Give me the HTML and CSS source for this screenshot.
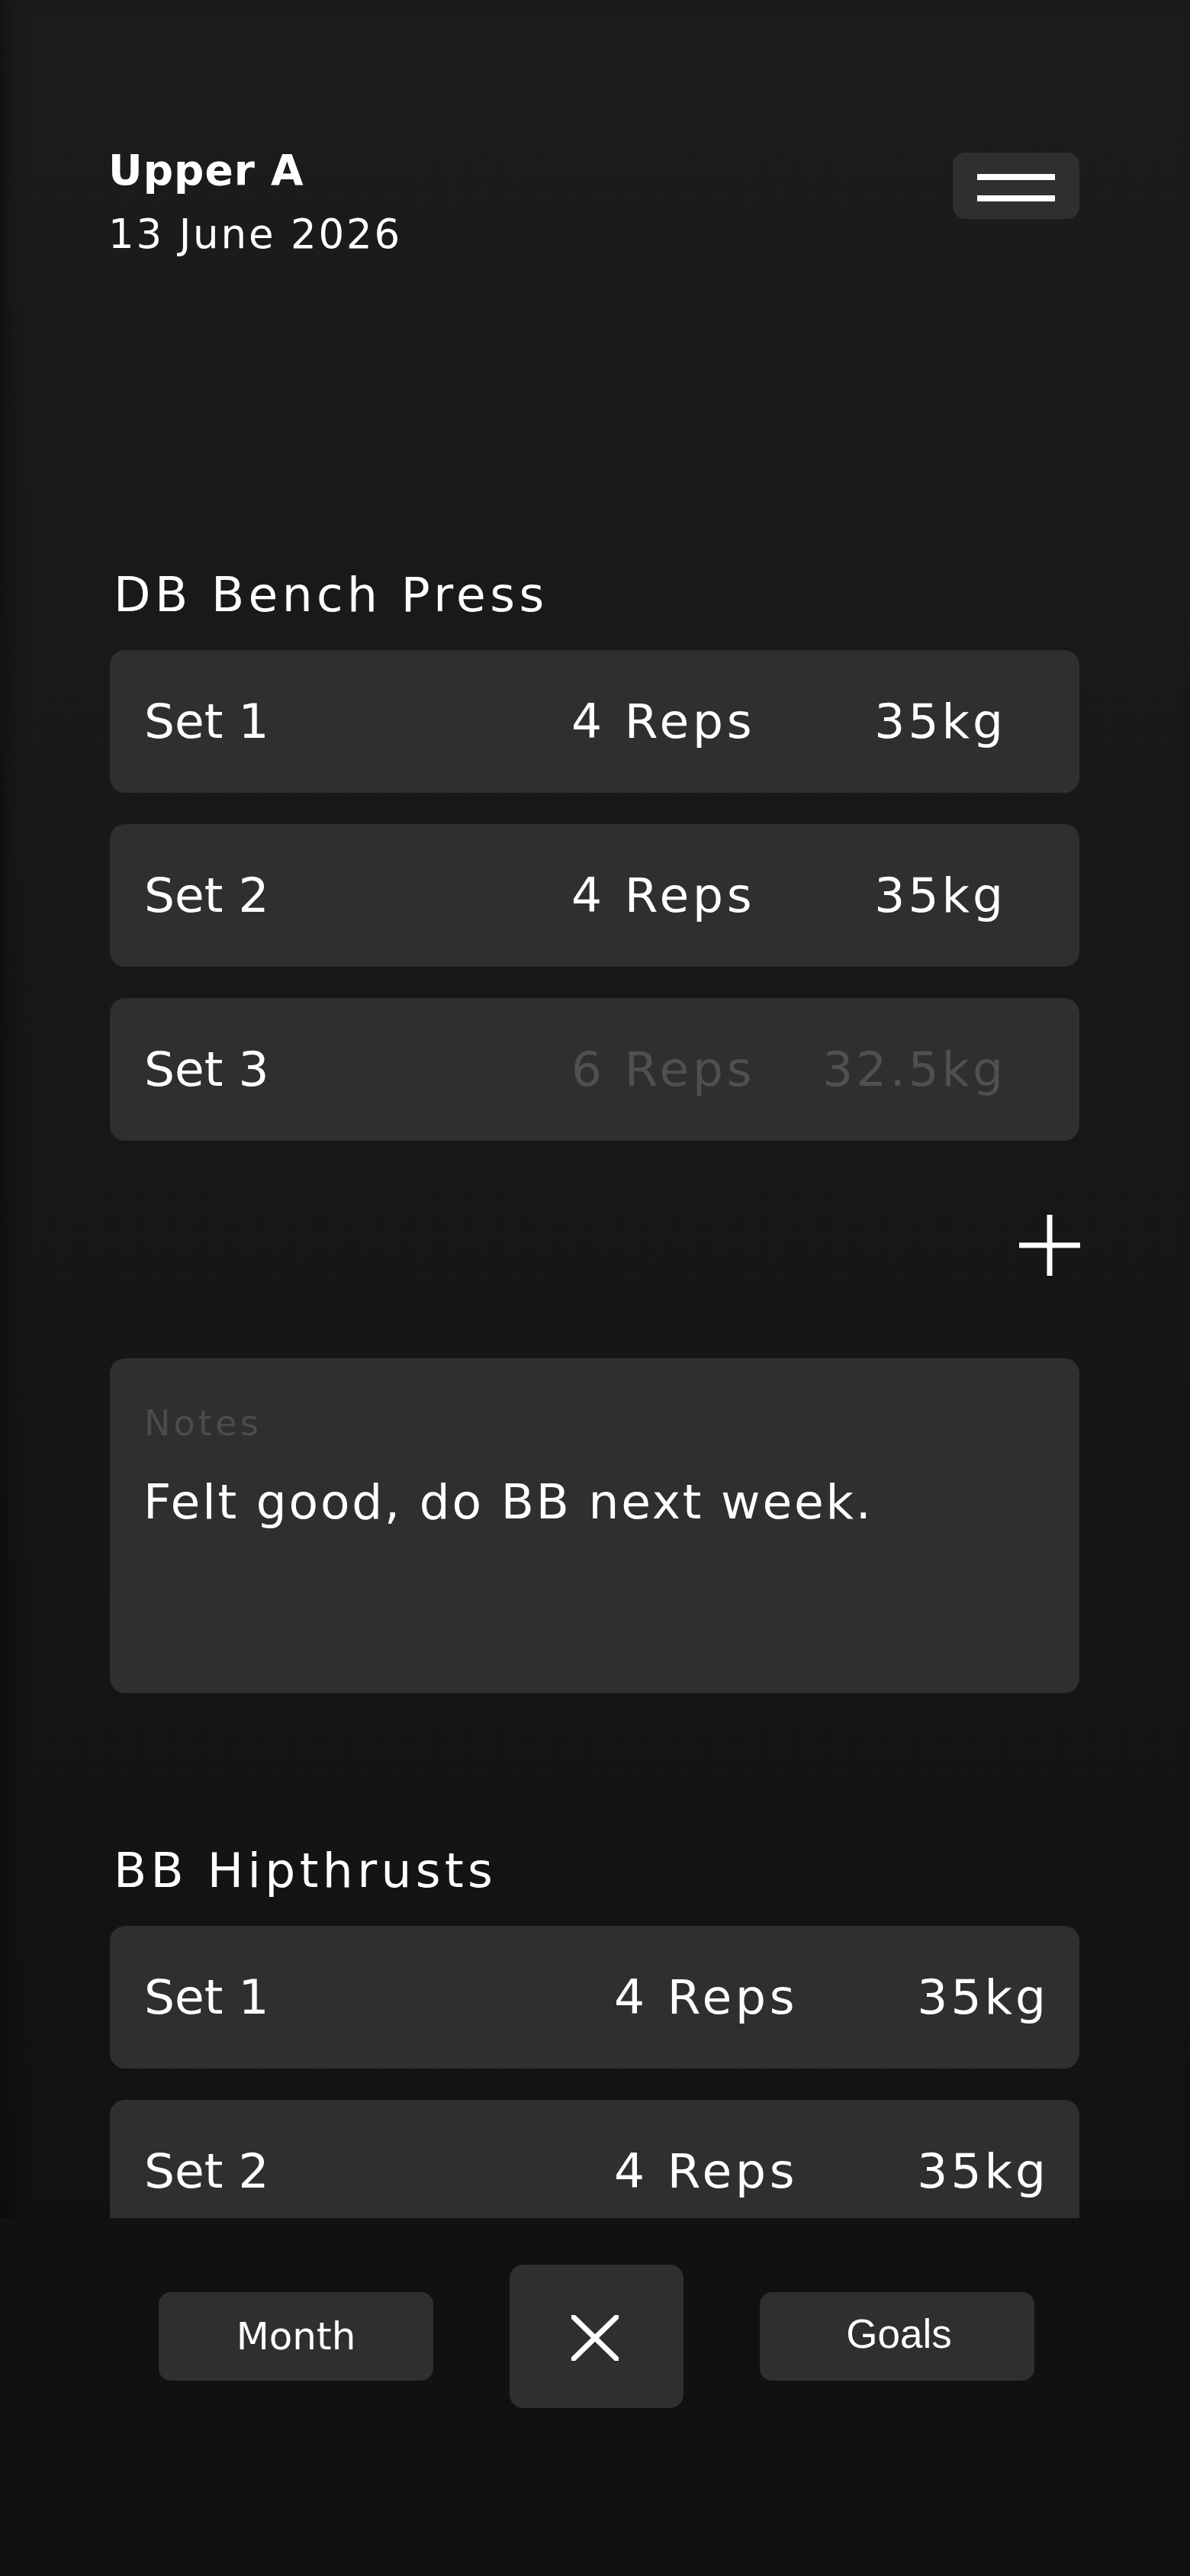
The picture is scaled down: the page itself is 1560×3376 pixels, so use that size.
FILE: index.html
```html
<!DOCTYPE html>
<html lang="en">
<head>
<meta charset="utf-8">
<title>Upper A</title>
<link rel="stylesheet" href="styles.css">
</head>
<body>
<div class="app">
  <main class="scroll">
    <header class="top">
      <div class="title-block">
        <h1 class="title">Upper A</h1>
        <p class="date">13 June 2026</p>
      </div>
      <button class="menu-btn" aria-label="Menu"><span class="bar"></span><span class="bar"></span></button>
    </header>

    <section class="exercise ex-first">
      <h2 class="ex-name">DB Bench Press</h2>
      <div class="sets">
        <div class="set-row"><span class="set-label">Set 1</span><span class="set-reps">4 Reps</span><span class="set-kg">35kg</span></div>
        <div class="set-row"><span class="set-label">Set 2</span><span class="set-reps">4 Reps</span><span class="set-kg">35kg</span></div>
        <div class="set-row is-pending"><span class="set-label">Set 3</span><span class="set-reps">6 Reps</span><span class="set-kg">32.5kg</span></div>
      </div>
      <div class="add-row">
        <button class="add-btn" aria-label="Add set">
          <svg class="plus-icon" viewBox="0 0 80 80" width="80" height="80"><path d="M40 0V80M0 40H80" stroke="#fff" stroke-width="7" fill="none"/></svg>
        </button>
      </div>
      <div class="notes">
        <div class="notes-label">Notes</div>
        <div class="notes-text">Felt good, do BB next week.</div>
      </div>
    </section>

    <section class="exercise ex-second">
      <h2 class="ex-name">BB Hipthrusts</h2>
      <div class="sets">
        <div class="set-row"><span class="set-label">Set 1</span><span class="set-reps">4 Reps</span><span class="set-kg">35kg</span></div>
        <div class="set-row"><span class="set-label">Set 2</span><span class="set-reps">4 Reps</span><span class="set-kg">35kg</span></div>
      </div>
    </section>
  </main>

  <nav class="bottom-nav">
    <div class="nav-row">
      <button class="nav-btn nav-month">Month</button>
      <button class="x-btn" aria-label="Close">
        <svg class="x-icon" viewBox="0 0 62 60" width="62" height="60"><path d="M-2 -2L64 62M64 -2L-2 62" stroke="#fff" stroke-width="7" fill="none"/></svg>
      </button>
      <button class="nav-btn nav-goals">Goals</button>
    </div>
  </nav>
</div>
</body>
</html>
```

FILE: styles.css
```css
html, body {
  margin: 0;
  padding: 0;
  background: #111111;
}

.app {
  width: 1560px;
  height: 3376px;
  display: flex;
  flex-direction: column;
  font-family: "DejaVu Sans", sans-serif;
  color: #ffffff;
}

.scroll {
  height: 2907px;
  flex: none;
  box-sizing: border-box;
  overflow: hidden;
  padding: 196px 145px 0 144px;
  background: linear-gradient(to bottom, #1f1f1f 0, #1c1c1c 14px, #171717 1500px, #121212 2907px);
  box-shadow: inset 16px 0 30px -8px rgba(0, 0, 0, 0.45);
}

.top {
  display: flex;
  justify-content: space-between;
  align-items: flex-start;
}

.title-block {
  flex: none;
}

.title {
  margin: 0 0 0 -2px;
  font-family: "DejaVu Sans", sans-serif;
  font-weight: 700;
  font-size: 55px;
  line-height: 55px;
  letter-spacing: 1px;
  white-space: nowrap;
}

.date {
  margin: 29px 0 0 -2px;
  font-family: "DejaVu Sans", sans-serif;
  font-weight: 400;
  font-size: 53px;
  line-height: 53px;
  letter-spacing: 2.8px;
  white-space: nowrap;
}

.menu-btn {
  width: 166px;
  height: 87px;
  margin-top: 4px;
  padding: 5px 0 0;
  border: none;
  border-radius: 16px;
  background: #2f2f2f;
  display: flex;
  flex-direction: column;
  align-items: center;
  justify-content: center;
  gap: 20px;
  box-sizing: border-box;
}

.bar {
  display: block;
  width: 102px;
  height: 8px;
  background: #ffffff;
}

.ex-first {
  margin-top: 415px;
}

.ex-second {
  margin-top: 201px;
}

.ex-name {
  margin: 0 0 41px;
  padding-left: 5px;
  font-weight: 400;
  font-size: 63px;
  line-height: 63px;
  letter-spacing: 5.4px;
}

.sets {
  display: flex;
  flex-direction: column;
  gap: 41px;
}

.set-row {
  height: 187px;
  box-sizing: border-box;
  display: flex;
  align-items: center;
  padding: 0 100px 0 45px;
  background: #2f2f2f;
  border-radius: 20px;
  font-size: 63px;
  line-height: 63px;
}

.ex-second .set-row {
  padding-right: 44px;
}

.set-label {
  flex: 1;
}

.set-reps {
  width: 304px;
  letter-spacing: 4.8px;
}

.set-kg {
  width: 266px;
  text-align: right;
  letter-spacing: 4px;
  margin-right: -4px;
}

.is-pending .set-reps,
.is-pending .set-kg {
  color: #505050;
}

.add-row {
  display: flex;
  justify-content: flex-end;
  margin-top: 97px;
}

.add-btn {
  width: 80px;
  height: 80px;
  margin-right: -1px;
  padding: 0;
  border: none;
  background: none;
  display: block;
}

.plus-icon {
  display: block;
}

.notes {
  margin-top: 108px;
  height: 439px;
  box-sizing: border-box;
  padding: 62px 40px 0 44px;
  background: #2f2f2f;
  border-radius: 20px;
}

.notes-label {
  margin-left: 1px;
  font-size: 46px;
  line-height: 46px;
  letter-spacing: 4.2px;
  color: #4b4b4b;
}

.notes-text {
  margin-top: 49px;
  font-size: 63px;
  line-height: 63px;
  letter-spacing: 2.8px;
}

.bottom-nav {
  flex: 1;
  background: #111111;
  padding-top: 61px;
  box-sizing: border-box;
}

.nav-row {
  display: flex;
  justify-content: center;
  align-items: center;
  gap: 100px;
  padding-left: 4px;
}

.nav-btn {
  width: 360px;
  height: 116px;
  padding: 0;
  border: none;
  border-radius: 16px;
  background: #2f2f2f;
  color: #ffffff;
  display: flex;
  align-items: center;
  justify-content: center;
  box-sizing: border-box;
}

.nav-month {
  font-family: "DejaVu Sans", sans-serif;
  font-size: 50px;
}

.nav-goals {
  font-family: "Liberation Sans", Arial, sans-serif;
  font-size: 53px;
  padding: 0 0 8px 5px;
}

.x-btn {
  width: 228px;
  height: 188px;
  padding: 4px 5px 0 0;
  border: none;
  border-radius: 18px;
  background: #2f2f2f;
  display: flex;
  align-items: center;
  justify-content: center;
  box-sizing: border-box;
}

.x-icon {
  display: block;
}
```
